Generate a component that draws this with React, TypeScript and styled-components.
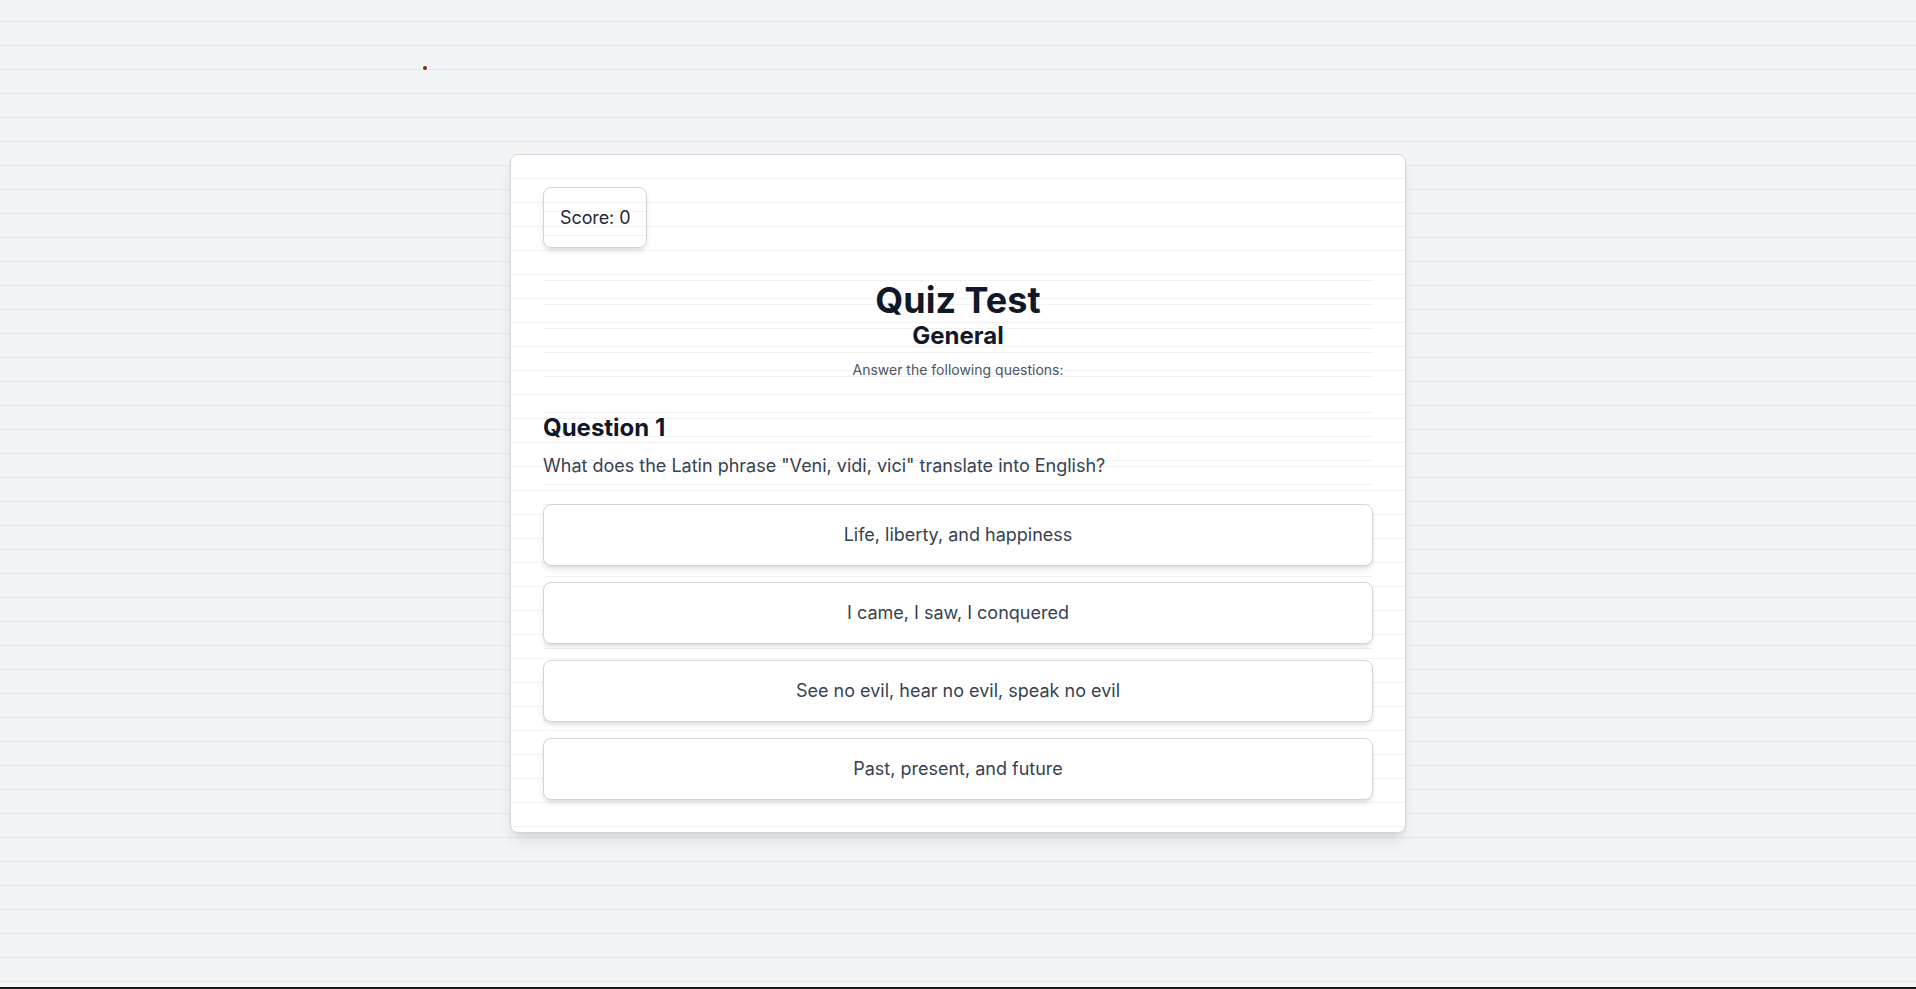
import React from "react";
import styled, { createGlobalStyle, css } from "styled-components";

const GlobalStyle = createGlobalStyle`
  *, *::before, *::after { box-sizing: border-box; }
  html {
    background-color: #f3f4f6;
    background-image: linear-gradient(to bottom, rgba(0, 0, 0, 0.055) 1px, transparent 1px);
    background-size: 100% 24px;
    background-position: 0 21px;
    min-height: 100%;
  }
  body {
    margin: 0;
    font-family: Inter, "Noto Sans", "Liberation Sans", sans-serif;
    color: #1f2937;
    -webkit-font-smoothing: antialiased;
  }
  h1, h2, h3, p { margin: 0; }
`;

const lined = css`
  background-image: linear-gradient(to bottom, rgba(0, 0, 0, 0.05) 1px, transparent 1px);
  background-size: 100% 24px;
`;

const Page = styled.main`
  display: flex;
  flex-direction: column;
  align-items: center;
  padding-top: 154px;
  min-height: 100vh;
`;

const Card = styled.section`
  width: 896px;
  padding: 32px;
  background-color: #ffffff;
  ${lined};
  background-origin: border-box;
  border: 1px solid #d4d6da;
  border-radius: 8px;
  box-shadow: 0 10px 15px -3px rgba(0, 0, 0, 0.1), 0 4px 6px -4px rgba(0, 0, 0, 0.1);
`;

const ScoreRow = styled.div`
  display: flex;
  margin-bottom: 32px;
`;

const ScoreBox = styled.div`
  ${lined};
  background-origin: border-box;
  padding: 16px;
  font-size: 18px;
  line-height: 27px;
  letter-spacing: -0.1px;
  color: #1f2937;
  border: 1px solid #d1d5db;
  border-radius: 8px;
  box-shadow: 0 4px 6px -1px rgba(0, 0, 0, 0.1), 0 2px 4px -2px rgba(0, 0, 0, 0.1);
`;

const Header = styled.header`
  ${lined};
  display: flex;
  flex-direction: column;
  align-items: center;
  text-align: center;
  margin-bottom: 32px;
`;

const Title = styled.h1`
  font-size: 36px;
  line-height: 40px;
  font-weight: 700;
  color: #111827;
`;

const Subtitle = styled.h2`
  font-size: 24px;
  line-height: 32px;
  font-weight: 700;
  color: #111827;
`;

const Instructions = styled.p`
  margin-top: 8px;
  font-size: 14px;
  line-height: 20px;
  color: #4b5563;
`;

const QuestionBlock = styled.div`
  ${lined};
  padding-bottom: 24px;
`;

const QuestionTitle = styled.h3`
  font-size: 24px;
  line-height: 32px;
  font-weight: 700;
  color: #111827;
`;

const QuestionText = styled.p`
  margin-top: 8px;
  font-size: 18px;
  line-height: 28px;
  color: #374151;
`;

const Options = styled.div`
  ${lined};
  display: flex;
  flex-direction: column;
  gap: 16px;
`;

const OptionButton = styled.button`
  width: 100%;
  padding: 16px;
  font-family: inherit;
  font-size: 18px;
  line-height: 28px;
  color: #374151;
  text-align: center;
  background: #ffffff;
  border: 1px solid #d1d5db;
  border-radius: 8px;
  box-shadow: 0 4px 6px -1px rgba(0, 0, 0, 0.1), 0 2px 4px -2px rgba(0, 0, 0, 0.1);
  cursor: pointer;
`;

const Dot = styled.span`
  position: absolute;
  left: 423px;
  top: 66px;
  width: 4px;
  height: 4px;
  border-radius: 50%;
  background: #8b2a10;
`;

const BottomEdge = styled.div`
  position: fixed;
  left: 0;
  right: 0;
  bottom: 0;
  height: 2px;
  background: #151515;
`;

const options = [
  "Life, liberty, and happiness",
  "I came, I saw, I conquered",
  "See no evil, hear no evil, speak no evil",
  "Past, present, and future",
];

export default function App() {
  return (
    <>
      <GlobalStyle />
      <Dot />
      <Page>
        <Card>
          <ScoreRow>
            <ScoreBox>Score: 0</ScoreBox>
          </ScoreRow>
          <Header>
            <Title>Quiz Test</Title>
            <Subtitle>General</Subtitle>
            <Instructions>Answer the following questions:</Instructions>
          </Header>
          <QuestionBlock>
            <QuestionTitle>Question 1</QuestionTitle>
            <QuestionText>
              What does the Latin phrase "Veni, vidi, vici" translate into English?
            </QuestionText>
          </QuestionBlock>
          <Options>
            {options.map((o) => (
              <OptionButton key={o} type="button">
                {o}
              </OptionButton>
            ))}
          </Options>
        </Card>
      </Page>
      <BottomEdge />
    </>
  );
}
